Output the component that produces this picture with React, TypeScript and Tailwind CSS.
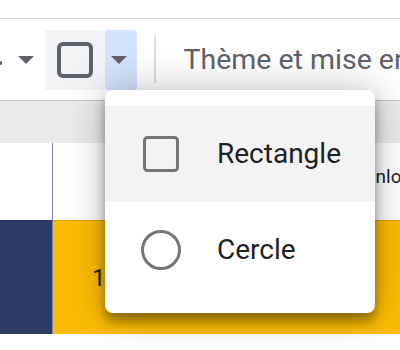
const Caret = ({ className = "" }: { className?: string }) => (
  <svg width="16" height="8" viewBox="0 0 16 8" className={`shrink-0 ${className}`}>
    <polygon points="0,0 16,0 8,8" fill="#5f6368" />
  </svg>
);

export default function App() {
  const shapes = [
    {
      label: "Rectangle",
      active: true,
      icon: (
        <svg width="36" height="36" viewBox="0 0 36 36">
          <rect x="1.5" y="1.5" width="33" height="33" rx="3" fill="none" stroke="#757575" strokeWidth="3" />
        </svg>
      ),
    },
    {
      label: "Cercle",
      active: false,
      icon: (
        <svg width="40" height="40" viewBox="0 0 40 40">
          <circle cx="20" cy="20" r="18.5" fill="none" stroke="#757575" strokeWidth="3" />
        </svg>
      ),
    },
  ];

  return (
    <div className="relative h-[350px] w-[400px] overflow-hidden bg-white font-['Roboto',sans-serif]">
      <div className="h-[18px]" />

      {/* toolbar */}
      <div className="flex h-[82px] items-center overflow-hidden border-t border-[#d6d6db]">
        <div className="h-[4px] w-[2px] shrink-0 translate-y-[3px] rounded-full bg-[#5f6368]" />
        <Caret className="ml-[16px]" />
        <div className="ml-[11px] flex h-[60px] shrink-0 items-stretch">
          <div className="flex w-[60px] items-center justify-center bg-[#f1f3f4]">
            <svg width="36" height="36" viewBox="0 0 36 36">
              <rect x="2" y="2" width="32" height="32" rx="4" fill="none" stroke="#5f6368" strokeWidth="4" />
            </svg>
          </div>
          <div className="flex w-[32px] items-center justify-center rounded-[3px] bg-[#d3e3fd]">
            <Caret className="-ml-[4px]" />
          </div>
        </div>
        <div className="ml-[17px] h-[47px] w-[1.5px] shrink-0 bg-[#dadce0]" />
        <span className="ml-[28px] shrink-0 whitespace-nowrap text-[28.5px] leading-[32px] text-[#5f6368]">
          Thème et mise en forme
        </span>
      </div>

      {/* header row */}
      <div className="h-[43px] border-t border-[#c6c6c6] bg-[#ebebeb]" />

      {/* table body */}
      <div className="flex">
        <div className="w-[53px] shrink-0 border-r border-[#7e87ae]">
          <div className="h-[77px] bg-white" />
          <div className="h-[114px] bg-[#2d3a63]" />
        </div>
        <div className="min-w-0 flex-1 overflow-hidden">
          <div className="flex h-[77px] items-center pl-[285px]">
            <span className="shrink-0 -translate-y-[4px] whitespace-nowrap text-[19px] text-[#202124]">Downloads</span>
          </div>
          <div className="flex h-[114px] items-center border-t border-[#d9a300] bg-[#fbbc04] pl-[39px]">
            <span className="text-[24px] text-[#202124]">1</span>
          </div>
        </div>
      </div>

      {/* shape menu */}
      <div className="absolute left-[105px] top-[90px] w-[270px] rounded-[8px] bg-white pb-[15px] pt-[16px] shadow-[0_8px_12px_rgba(0,0,0,0.38),0_0_40px_rgba(0,0,0,0.25)]">
        {shapes.map((s) => (
          <div key={s.label} className={`flex h-[96px] items-center ${s.active ? "bg-[#f3f3f3]" : ""}`}>
            <div className="ml-[36px] flex w-[40px] justify-center">{s.icon}</div>
            <span className="ml-[36px] text-[28px] leading-[32px] text-[#202124]">{s.label}</span>
          </div>
        ))}
      </div>
    </div>
  );
}
